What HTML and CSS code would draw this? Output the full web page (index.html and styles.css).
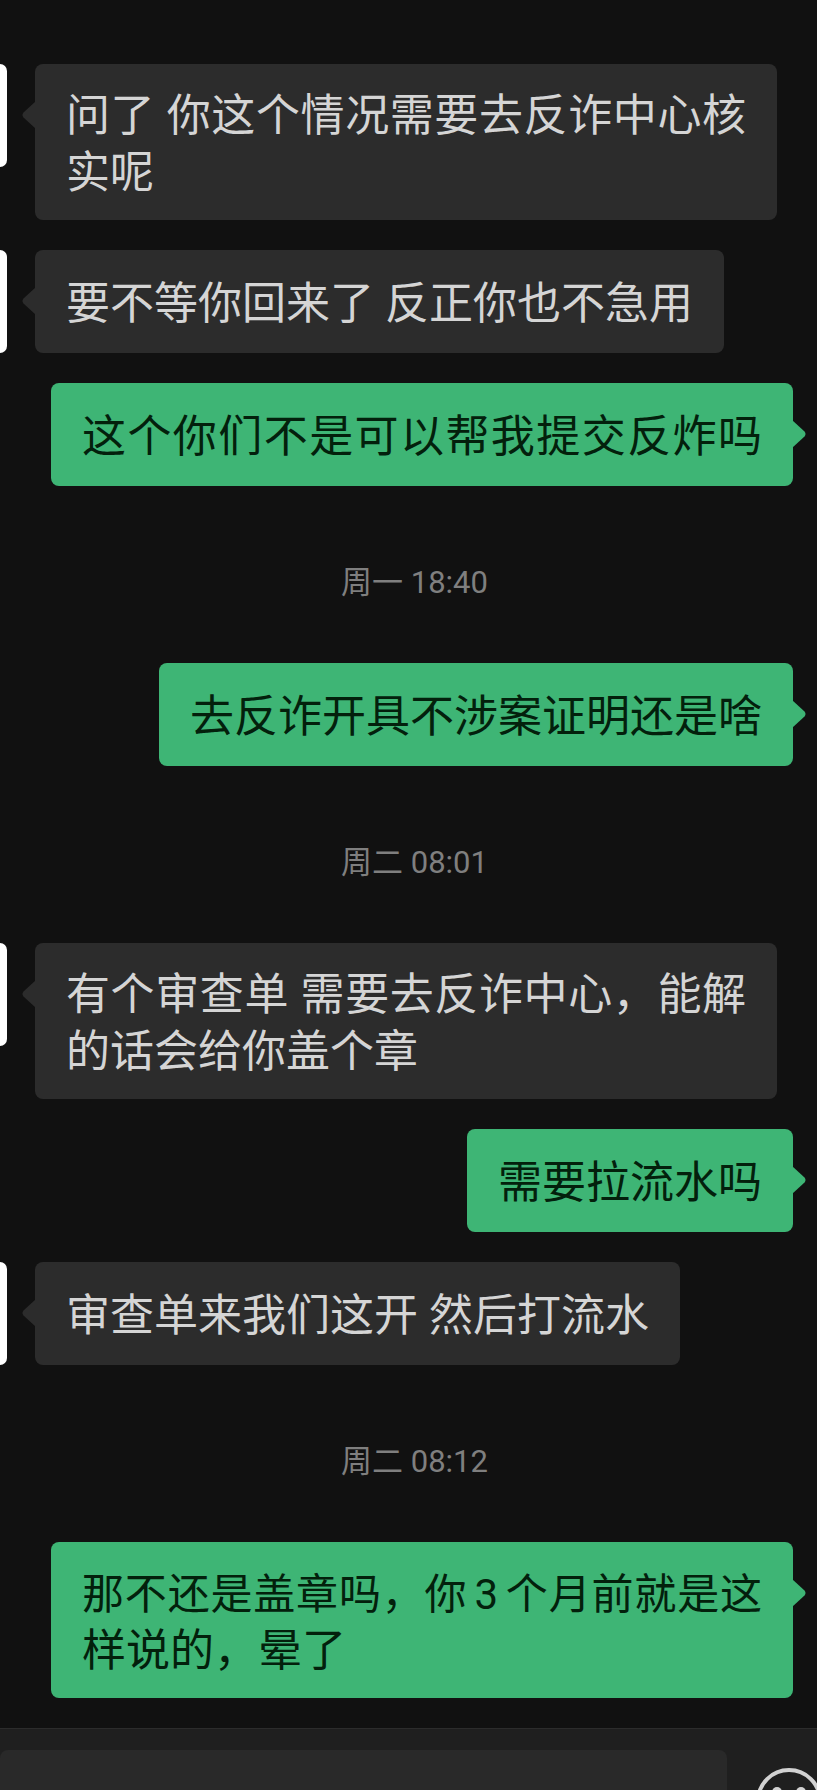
FILE: index.html
```html
<!DOCTYPE html>
<html lang="zh-CN">
<head>
<meta charset="utf-8">
<meta name="viewport" content="width=device-width, initial-scale=1">
<title>聊天</title>
<link rel="stylesheet" href="styles.css">
</head>
<body>
<main class="chat">
  <div class="message received">
    <span class="avatar"></span>
    <div class="bubble"><svg class="tail" viewBox="0 0 14 28" aria-hidden="true"><path d="M14 0 1.500 11.500Q-.5 14 1.500 16.500L14 28Z"/></svg><p class="text">问了 你这个情况需要去反诈中心核实呢</p></div>
  </div>
  <div class="message received">
    <span class="avatar"></span>
    <div class="bubble"><svg class="tail" viewBox="0 0 14 28" aria-hidden="true"><path d="M14 0 1.500 11.500Q-.5 14 1.500 16.500L14 28Z"/></svg><p class="text">要不等你回来了 反正你也不急用</p></div>
  </div>
  <div class="message sent">
    <div class="bubble full"><svg class="tail" viewBox="0 0 14 28" aria-hidden="true"><path d="M0 0 12.500 11.500Q14.500 14 12.500 16.500L0 28Z"/></svg><p class="text">这个你们不是可以帮我提交反炸吗</p></div>
  </div>
  <time class="stamp">周一 18:40</time>
  <div class="message sent">
    <div class="bubble"><svg class="tail" viewBox="0 0 14 28" aria-hidden="true"><path d="M0 0 12.500 11.500Q14.500 14 12.500 16.500L0 28Z"/></svg><p class="text">去反诈开具不涉案证明还是啥</p></div>
  </div>
  <time class="stamp">周二 08:01</time>
  <div class="message received">
    <span class="avatar"></span>
    <div class="bubble"><svg class="tail" viewBox="0 0 14 28" aria-hidden="true"><path d="M14 0 1.500 11.500Q-.5 14 1.500 16.500L14 28Z"/></svg><p class="text">有个审查单 需要去反诈中心，能解的话会给你盖个章</p></div>
  </div>
  <div class="message sent">
    <div class="bubble"><svg class="tail" viewBox="0 0 14 28" aria-hidden="true"><path d="M0 0 12.500 11.500Q14.500 14 12.500 16.500L0 28Z"/></svg><p class="text">需要拉流水吗</p></div>
  </div>
  <div class="message received">
    <span class="avatar"></span>
    <div class="bubble"><svg class="tail" viewBox="0 0 14 28" aria-hidden="true"><path d="M14 0 1.500 11.500Q-.5 14 1.500 16.500L14 28Z"/></svg><p class="text">审查单来我们这开 然后打流水</p></div>
  </div>
  <time class="stamp">周二 08:12</time>
  <div class="message sent">
    <div class="bubble compact"><svg class="tail" viewBox="0 0 14 28" aria-hidden="true"><path d="M0 0 12.500 11.500Q14.500 14 12.500 16.500L0 28Z"/></svg><p class="text">那不还是盖章吗，你<span class="digit">3</span>个月前就是这样说的，晕了</p></div>
  </div>
</main>
<footer class="composer">
  <input class="field" type="text" aria-label="输入消息">
  <button class="emoji" type="button" aria-label="表情">
    <svg viewBox="0 0 66 66" aria-hidden="true"><circle cx="33" cy="33" r="31" fill="none" stroke="#d2d2d2" stroke-width="4"/><circle cx="21" cy="24" r="5" fill="#d2d2d2"/><circle cx="45" cy="24" r="5" fill="#d2d2d2"/><path d="M17 38h32a16 16 0 0 1-32 0Z" fill="none" stroke="#d2d2d2" stroke-width="4"/></svg>
  </button>
</footer>
</body>
</html>
```
FILE: styles.css
```css
* {
  box-sizing: border-box;
}

body {
  margin: 0;
  min-height: 100vh;
  display: flex;
  flex-direction: column;
  background: #111111;
  font-family: Roboto, "Noto Sans CJK SC", sans-serif;
}

.chat {
  display: flex;
  flex-direction: column;
  gap: 30px;
  padding: 64px 0 30px;
}

.message {
  display: flex;
  align-items: flex-start;
}

.received {
  gap: 28px;
  padding-right: 40px;
}

.sent {
  justify-content: flex-end;
  padding: 0 24px 0 51px;
}

.avatar {
  flex: none;
  width: 7px;
  height: 103px;
  border-radius: 0 8px 8px 0;
  background: #ffffff;
}

.bubble {
  position: relative;
  display: flex;
  align-items: center;
  min-height: 103px;
  padding: 24px 31px 18px;
  border-radius: 8px;
}

.received .bubble {
  background: #2c2c2c;
  color: #d5d5d5;
}

.sent .bubble {
  background: #3eb575;
  color: #03200c;
}

.text {
  margin: 0;
  font-size: 44px;
  line-height: 57px;
  text-align: justify;
}

.full {
  flex: 1;
}

.full .text {
  flex: 1;
  text-align-last: justify;
}

.compact .text::first-line {
  font-size: 42px;
}

.digit {
  margin: 0 7px;
}

.tail {
  position: absolute;
  top: 37px;
  width: 14px;
  height: 28px;
}

.received .tail {
  right: 100%;
  margin-right: -1px;
  fill: #2c2c2c;
}

.sent .tail {
  left: 100%;
  margin-left: -1px;
  fill: #3eb575;
}

.stamp {
  padding: 44px 0 28px 12px;
  color: #7f7f7f;
  font-size: 31px;
  line-height: 45px;
  text-align: center;
}

.composer {
  flex: 1;
  display: flex;
  align-items: flex-start;
  gap: 29px;
  height: 62px;
  overflow: hidden;
  padding-top: 21px;
  border-top: 1px solid #2c2c2c;
  background: #1f1f1f;
}

.field {
  flex: 1;
  min-width: 0;
  height: 80px;
  padding: 0 24px;
  border: 0;
  border-radius: 8px;
  background: #292929;
  color: #d5d5d5;
  font: inherit;
  font-size: 44px;
}

.emoji {
  flex: none;
  width: 61px;
  height: 80px;
  padding: 18px 0 0;
  border: 0;
  background: none;
}

.emoji svg {
  display: block;
  width: 66px;
  height: 66px;
}
```
